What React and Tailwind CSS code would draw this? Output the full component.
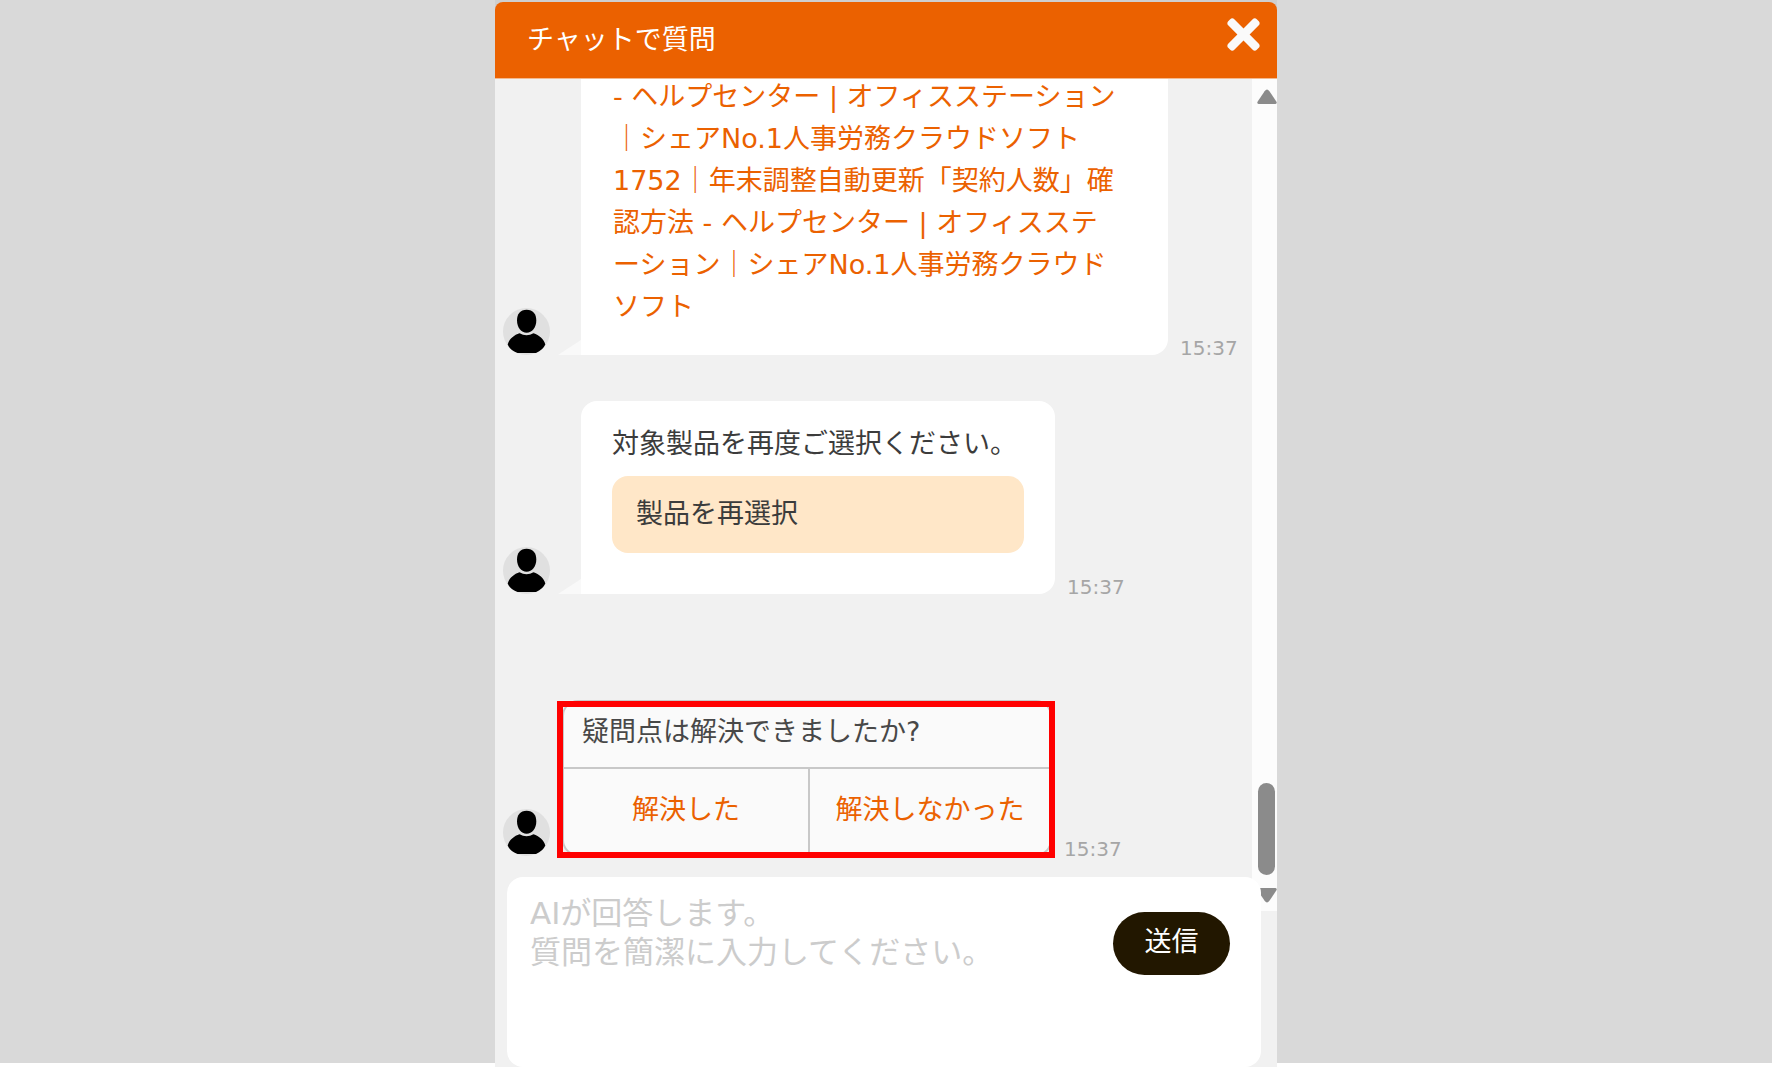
import React, { useState } from "react";
import { FaTimes } from "react-icons/fa";

const Avatar = () => (
  <svg viewBox="0 0 47 47" className="h-[47px] w-[47px] shrink-0" aria-hidden="true">
    <circle cx="23.5" cy="23.5" r="23.5" fill="#e0e0e0" />
    <path
      d="M16.5 25.2 Q23.5 29.5 30.5 25.2 C36 27 41 31 42.3 36.5 Q40 42 33 45 H14.5 Q7 42 4.7 36.5 C6 31 11 27 16.5 25.2 Z"
      fill="#000"
    />
    <path
      d="M23.6 1.8 C30 1.8 33.3 6 33.3 12.5 C33.3 19.5 29 24.8 23.6 24.8 C18.2 24.8 14 19.5 14 12.5 C14 6 17.2 1.8 23.6 1.8 Z"
      fill="#000"
    />
  </svg>
);

const Tail = () => (
  <svg viewBox="0 0 23 15" className="ml-2 h-[15px] w-[23px] shrink-0" aria-hidden="true">
    <path d="M0 15 L23 0 V15 Z" fill="#f9f9f9" />
  </svg>
);

const Time = ({ children }) => (
  <time className="ml-3 text-xl leading-[14px] text-[#a6a6a6]">{children}</time>
);

const Arrow = ({ down }) => (
  <svg viewBox="0 0 20 15" className="h-[15px] w-5 shrink-0" aria-hidden="true">
    <path
      d={
        down
          ? "M1.5 0 H18.5 Q20.5 0.5 19.3 2.6 L12.4 12.8 Q10 16 7.6 12.8 L0.7 2.6 Q-0.5 0.5 1.5 0 Z"
          : "M1.5 15 H18.5 Q20.5 14.5 19.3 12.4 L12.4 2.2 Q10 -1 7.6 2.2 L0.7 12.4 Q-0.5 14.5 1.5 15 Z"
      }
      fill="#8b8b8b"
    />
  </svg>
);

const Header = () => (
  <header className="shrink-0 border-b border-[#f3b98f] bg-[#cfcfcf] pt-[2px]">
    <div className="flex h-[76px] items-center justify-between rounded-t-lg bg-[#eb6100] pr-[10px] pl-8">
      <h1 className="text-[27px] leading-[42px] text-white">チャットで質問</h1>
      <button type="button" aria-label="閉じる" className="mb-3 text-[#fafafa]">
        <FaTimes size={47} />
      </button>
    </div>
  </header>
);

const App = () => {
  const [message, setMessage] = useState("");

  return (
    <div className="flex h-screen justify-center bg-white font-['DejaVu_Sans','Noto_Sans_CJK_JP',sans-serif] text-[27px] leading-[42px] text-[#3c3c3c]">
      <div className="mb-1 flex-1 bg-[#d9d9d9]" />
      <main className="flex w-full max-w-[782px] flex-col bg-[#f1f1f1]">
        <Header />

        <div className="flex min-h-0 flex-1">
          {/* Message list */}
          <div className="flex min-w-0 flex-1 flex-col justify-end overflow-hidden pb-[55px] pl-2">
            <div className="flex items-end">
              <Avatar />
              <Tail />
              <div className="w-[587px] rounded-2xl rounded-bl-none bg-white px-8 pt-5 pb-[27px] whitespace-nowrap text-[#eb6100]">
                <a href="#faq" className="block">
                  - ヘルプセンター | オフィスステーション
                  <br />
                  ｜シェアNo.1人事労務クラウドソフト
                </a>
                <a href="#faq-1752" className="block">
                  1752｜年末調整自動更新「契約人数」確
                  <br />
                  認方法 - ヘルプセンター | オフィスステ
                  <br />
                  ーション｜シェアNo.1人事労務クラウド
                  <br />
                  ソフト
                </a>
              </div>
              <Time>15:37</Time>
            </div>

            <div className="mt-[46px] flex items-end">
              <Avatar />
              <Tail />
              <div className="w-[474px] rounded-2xl rounded-bl-none bg-white px-[31px] pt-[22px] pb-[41px]">
                <p>対象製品を再度ご選択ください。</p>
                <button
                  type="button"
                  className="mt-[11px] h-[77px] w-full rounded-2xl bg-[#ffe7c8] px-6 pb-[2px] text-left"
                >
                  製品を再選択
                </button>
              </div>
              <Time>15:37</Time>
            </div>

            <div className="mt-[106px] flex items-end">
              <Avatar />
              <div className="relative ml-3 w-[490px] rounded-2xl border-2 border-[#c8c8c8] bg-[#fafafa]">
                <p className="border-b-2 border-[#c8c8c8] px-[18px] pt-[9px] pb-[14px] text-[#484848]">
                  疑問点は解決できましたか?
                </p>
                <div className="flex h-[85px] text-[#eb6100]">
                  <button type="button" className="w-[246px] border-r-2 border-[#c8c8c8] pb-1">
                    解決した
                  </button>
                  <button type="button" className="flex-1 pb-1">
                    解決しなかった
                  </button>
                </div>
                {/* Highlight frame around the survey */}
                <div className="pointer-events-none absolute -top-px -right-[5px] -bottom-1 -left-[7px] border-6 border-[#ff0000]" />
              </div>
              <Time>15:37</Time>
            </div>
          </div>

          {/* Scrollbar */}
          <div className="flex w-[25px] shrink-0 flex-col items-end bg-[#fcfcfc] pt-[10px] pb-2">
            <Arrow />
            <div className="mt-auto mr-[2px] h-[92px] w-[17px] rounded-full bg-[#8b8b8b]" />
            <div className="mt-[13px] flex">
              <Arrow down />
            </div>
          </div>
        </div>

        {/* Composer */}
        <form
          onSubmit={(e) => e.preventDefault()}
          className="z-10 -mt-[34px] mr-4 ml-3 flex h-[190px] shrink-0 items-start rounded-2xl bg-white pr-[31px] pl-[23px]"
        >
          <textarea
            aria-label="質問"
            value={message}
            onChange={(e) => setMessage(e.target.value)}
            placeholder={"AIが回答します。\n質問を簡潔に入力してください。"}
            className="h-full flex-1 resize-none pt-[17px] text-[31px] leading-[39px] outline-none placeholder:text-[#cccccc]"
          />
          <button
            type="submit"
            className="mt-[35px] h-[63px] w-[117px] rounded-full bg-[#221700] pb-1 text-white"
          >
            送信
          </button>
        </form>
      </main>
      <div className="mb-1 flex-1 bg-[#d9d9d9]" />
    </div>
  );
};

export default App;
